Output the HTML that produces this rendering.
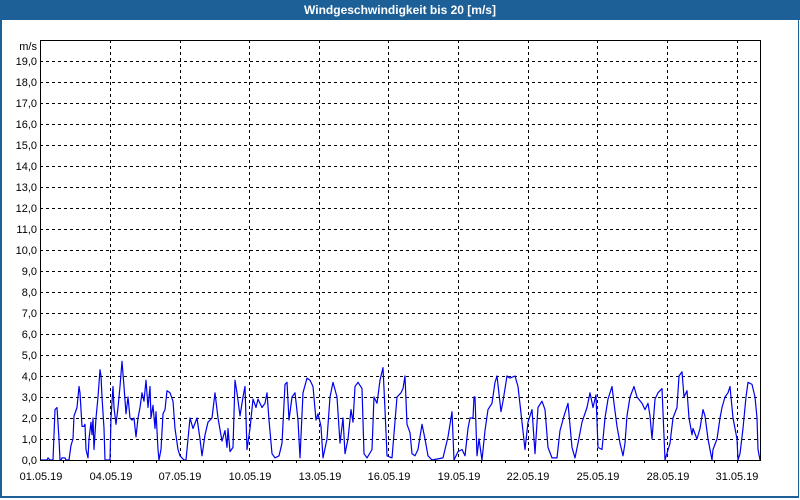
<!DOCTYPE html>
<html><head><meta charset="utf-8"><style>
html,body{margin:0;padding:0;}
body{width:800px;height:500px;position:relative;background:#fff;font-family:"Liberation Sans",sans-serif;overflow:hidden;}
.frame{position:absolute;left:0;top:0;width:796px;height:496px;border:2px solid #1d6097;border-top:none;border-right:1px solid #1d6097;}
.title{position:absolute;left:0;top:0;width:800px;height:20px;background:#1d6097;color:#fff;font-weight:bold;font-size:12px;line-height:20px;text-align:center;}
</style></head><body>
<div class="frame"></div>
<div class="title">Windgeschwindigkeit bis 20 [m/s]</div>
<svg width="800" height="500" style="position:absolute;left:0;top:0" font-family="Liberation Sans, sans-serif" font-size="11">
<g stroke="#000" stroke-width="1" stroke-dasharray="3,3" shape-rendering="crispEdges">
<line x1="40" x2="760" y1="439.5" y2="439.5"/><line x1="40" x2="760" y1="418.5" y2="418.5"/><line x1="40" x2="760" y1="397.5" y2="397.5"/><line x1="40" x2="760" y1="376.5" y2="376.5"/><line x1="40" x2="760" y1="355.5" y2="355.5"/><line x1="40" x2="760" y1="334.5" y2="334.5"/><line x1="40" x2="760" y1="313.5" y2="313.5"/><line x1="40" x2="760" y1="292.5" y2="292.5"/><line x1="40" x2="760" y1="271.5" y2="271.5"/><line x1="40" x2="760" y1="250.5" y2="250.5"/><line x1="40" x2="760" y1="229.5" y2="229.5"/><line x1="40" x2="760" y1="208.5" y2="208.5"/><line x1="40" x2="760" y1="187.5" y2="187.5"/><line x1="40" x2="760" y1="166.5" y2="166.5"/><line x1="40" x2="760" y1="145.5" y2="145.5"/><line x1="40" x2="760" y1="124.5" y2="124.5"/><line x1="40" x2="760" y1="103.5" y2="103.5"/><line x1="40" x2="760" y1="82.5" y2="82.5"/><line x1="40" x2="760" y1="61.5" y2="61.5"/>
<line y1="40" y2="460" x1="110.5" x2="110.5"/><line y1="40" y2="460" x1="180.5" x2="180.5"/><line y1="40" y2="460" x1="249.5" x2="249.5"/><line y1="40" y2="460" x1="319.5" x2="319.5"/><line y1="40" y2="460" x1="388.5" x2="388.5"/><line y1="40" y2="460" x1="458.5" x2="458.5"/><line y1="40" y2="460" x1="528.5" x2="528.5"/><line y1="40" y2="460" x1="597.5" x2="597.5"/><line y1="40" y2="460" x1="667.5" x2="667.5"/><line y1="40" y2="460" x1="737.5" x2="737.5"/>
</g>
<g transform="translate(0,460) scale(1,-21)">
<polyline fill="none" stroke="#0000ee" stroke-width="1.2" vector-effect="non-scaling-stroke" stroke-linejoin="round" points="40,0 47,0 48,0.1 50,0 53,0 55,2.4 57,2.5 59,1 60,0 61,0 62,0.1 65,0.1 66,0 69,0 71,0.7 73,1 74,2.1 77,2.5 79,3.5 80,3.2 82,1.6 84,1.6 85,1.7 86,0.5 88,0.1 89,1 91,1.8 92,1.2 93,2 94,0.5 96,2 98,3 100,4.3 101,4 102,3 104,1.5 105,0 110,0 111,2 113,3.5 114,2.5 116,1.7 118,2.5 120,3.5 122,4.7 124,3.5 126,2.2 128,3 130,2 132,1.9 134,2 136,1.1 138,2 140,2.5 142,3.2 144,2.8 146,3.8 148,2.5 150,3.5 151,2 153,2.6 155,1.5 156,2.3 158,0.5 159,0 161,0.5 163,2.2 165,2.4 167,3.3 170,3.2 173,2.8 175,1.5 178,0.5 180,0.2 182,0.1 184,0 186,0 188,1 190,2 193,1.5 197,2 200,1 202,0.2 205,1.2 208,1.8 212,2 215,3.2 218,2 222,0.9 225,1.4 227,0.6 228,1.5 230,0.4 233,0.6 235,3.8 237,3.2 240,2.1 243,3 245,3.5 247,0.5 250,1.5 253,2.9 256,2.5 258,2.9 262,2.5 265,2.7 267,3.2 269,1.9 272,0.3 275,0.1 279,0.2 282,0.8 285,3.6 287,3.7 289,1.9 292,3 295,3.2 298,1.9 300,0.1 303,3.2 307,3.9 310,3.8 313,3.5 316,1.9 318,2.2 321,1.6 323,0.1 327,1 330,3 333,3.7 337,3 340,0.8 343,2 345,0.3 348,1 351,2.4 353,1.8 355,3.5 358,3.7 362,3.4 364,0.3 367,0.1 372,0.5 374,3 377,2.7 380,3.8 383,4.4 385,2.4 387,0.2 392,0.1 397,3 401,3.2 403,3.4 405,4 407,1.7 410,1.3 412,0.3 415,0.2 418,0.5 422,1.7 425,1 428,0.2 432,0 443,0.1 448,1.1 452,2.3 454,0 458,0.4 462,0.5 465,0.2 468,1.5 470,2 473,2 474,3 475,3 477,0.2 479,1 482,0 485,1.4 488,2.4 492,2.7 495,3.7 497,4 501,2.3 503,2.8 507,4 510,3.9 515,4 518,3.5 522,1.8 525,0.5 528,1.8 532,2.4 535,0.3 538,2.5 542,2.8 545,2.4 548,0.6 552,0.1 557,0.1 560,1.4 564,2.1 568,2.7 572,0.6 575,0.1 578,0.8 582,1.8 587,2.5 590,3.2 593,2.5 596,3.1 598,0.6 602,0.5 605,2 608,2.9 612,3.5 614,2.7 617,1.6 620,0.8 623,0.2 625,0.8 627,2.1 630,3 634,3.5 637,3 642,2.7 645,2.4 648,2.7 650,2.1 652,1 655,2.9 658,3.2 662,3.4 665,0 670,0.8 673,2 677,2.5 679,4 682,4.2 684,3 687,3.3 689,2 692,1.2 693,1.5 697,1 700,1.5 703,2.4 705,2.1 708,1 712,0 713,0.5 717,1 720,2 722,2.5 725,3 728,3.2 730,3.5 733,2 737,1 738,0 740,0.3 743,1.5 746,3 748,3.7 752,3.6 755,3 757,2 758,0.5 760,0"/>
</g>
<rect x="40.5" y="40.5" width="720" height="420" fill="none" stroke="#000" stroke-width="1" shape-rendering="crispEdges"/>
<g stroke="#000" shape-rendering="crispEdges" id="ticks">
<path d="M63.5 460v3M86.5 460v3M110.5 460v3M133.5 460v3M156.5 460v3M180.5 460v3M203.5 460v3M226.5 460v3M249.5 460v3M272.5 460v3M296.5 460v3M319.5 460v3M342.5 460v3M365.5 460v3M388.5 460v3M412.5 460v3M435.5 460v3M458.5 460v3M481.5 460v3M505.5 460v3M528.5 460v3M551.5 460v3M574.5 460v3M597.5 460v3M621.5 460v3M644.5 460v3M667.5 460v3M690.5 460v3M714.5 460v3M737.5 460v3"/>
</g>
<g fill="#000" text-anchor="end">
<text x="37" y="50">m/s</text>
<text x="37" y="65">19,0</text><text x="37" y="86">18,0</text><text x="37" y="107">17,0</text><text x="37" y="128">16,0</text><text x="37" y="149">15,0</text><text x="37" y="170">14,0</text><text x="37" y="191">13,0</text><text x="37" y="212">12,0</text><text x="37" y="233">11,0</text><text x="37" y="254">10,0</text><text x="37" y="275">9,0</text><text x="37" y="296">8,0</text><text x="37" y="317">7,0</text><text x="37" y="338">6,0</text><text x="37" y="359">5,0</text><text x="37" y="380">4,0</text><text x="37" y="401">3,0</text><text x="37" y="422">2,0</text><text x="37" y="443">1,0</text><text x="37" y="464">0,0</text>
</g>
<g fill="#000" text-anchor="middle">
<text x="41" y="480">01.05.19</text><text x="111" y="480">04.05.19</text><text x="180" y="480">07.05.19</text><text x="250" y="480">10.05.19</text><text x="320" y="480">13.05.19</text><text x="389" y="480">16.05.19</text><text x="459" y="480">19.05.19</text><text x="528" y="480">22.05.19</text><text x="598" y="480">25.05.19</text><text x="668" y="480">28.05.19</text><text x="737" y="480">31.05.19</text>
</g>
</svg>
</body></html>
